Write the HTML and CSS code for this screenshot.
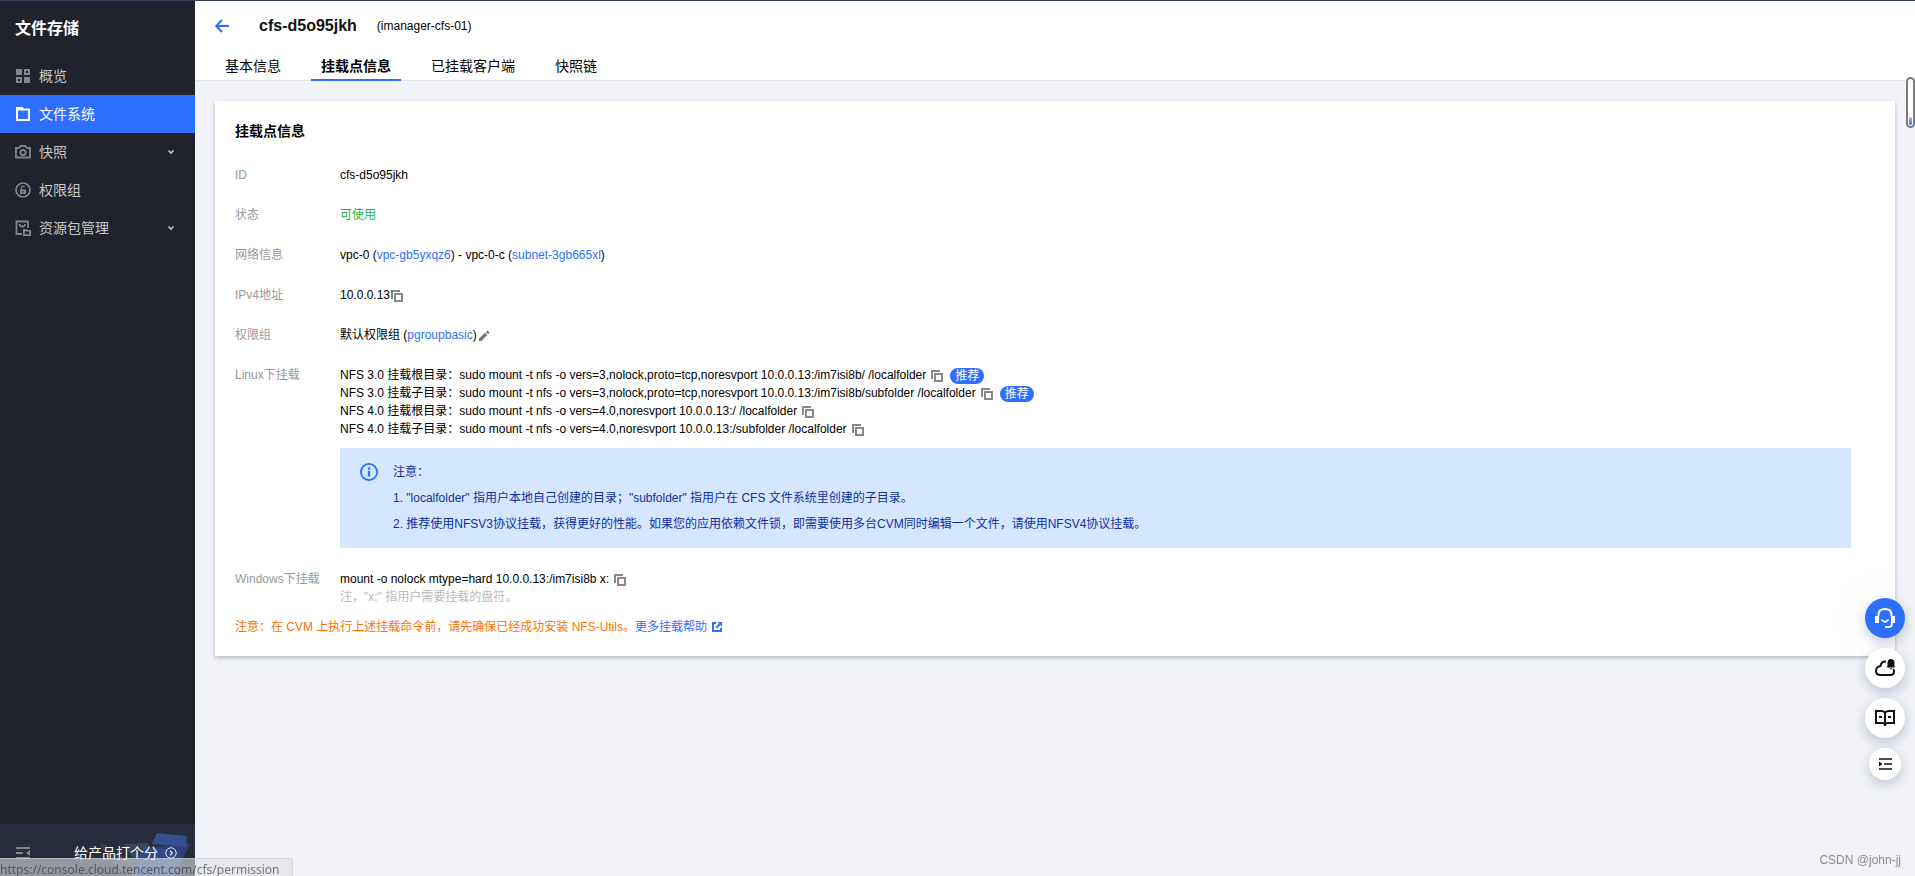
FILE: index.html
```html
<!DOCTYPE html>
<html lang="zh-CN">
<head>
<meta charset="utf-8">
<title>文件存储</title>
<link rel="stylesheet" href="styles.css">
</head>
<body>
<svg class="defs" aria-hidden="true">
  <symbol id="copy" viewBox="0 0 12 12"><path d="M1 9V1h8M4 4h7v7H4z" fill="none" stroke="#888" stroke-width="2"/></symbol>
  <symbol id="chevron" viewBox="0 0 8 6"><path d="M1.500 1.500L4 4l2.500-2.500" fill="none" stroke="#c5c8cc" stroke-width="1.600"/></symbol>
</svg>
<div class="app">
  <aside class="sidebar">
    <h2 class="sidebar-title">文件存储</h2>
    <nav class="menu">
      <a class="menu-item" href="#"><svg class="menu-icon" viewBox="0 0 16 16"><path d="M1 1h6v6H1zM9 9h6v6H9z" fill="#80868c"/><path d="M10 2h4v4h-4zM2 10h4v4H2z" fill="none" stroke="#80868c" stroke-width="2"/></svg><span>概览</span></a>
      <a class="menu-item active" href="#"><svg class="menu-icon" viewBox="0 0 16 16"><path d="M1 1h6.500l1.500 1.500h6V15H1zM3 4.500V13h10V4.500z" fill="#fff" fill-rule="evenodd"/></svg><span>文件系统</span></a>
      <a class="menu-item" href="#"><svg class="menu-icon" viewBox="0 0 16 16"><path d="M1 4h3l1.500-2h5L12 4h3v9.500H1z" fill="none" stroke="#80868c" stroke-width="1.800"/><circle cx="8" cy="8.500" r="2.600" fill="none" stroke="#80868c" stroke-width="1.800"/></svg><span>快照</span><svg class="chevron"><use href="#chevron"/></svg></a>
      <a class="menu-item" href="#"><svg class="menu-icon" viewBox="0 0 16 16"><circle cx="8" cy="8" r="7" fill="none" stroke="#80868c" stroke-width="1.700"/><path d="M5 7.500h6V12H5z" fill="#80868c"/><path d="M6.500 8V5.200q0-1 1.500-1t1.500 1" fill="none" stroke="#80868c" stroke-width="1.300"/><path d="M7.400 9h1.200v1.500H7.400z" fill="#20222c"/></svg><span>权限组</span></a>
      <a class="menu-item" href="#"><svg class="menu-icon" viewBox="0 0 16 16"><path d="M7 14H1.500V1.500H13V8M4.500 4q0 2.500 2.800 2.500T10 4" fill="none" stroke="#80868c" stroke-width="1.800"/><path d="M8 9h3.500l1 1H16v6H8zM9.800 11.500v2.700h4.400v-2.700z" fill="#80868c" fill-rule="evenodd"/></svg><span>资源包管理</span><svg class="chevron"><use href="#chevron"/></svg></a>
    </nav>
    <div class="sidebar-foot">
      <svg class="foot-art" viewBox="0 0 96 44" aria-hidden="true">
        <path d="M2 12q6-2 10 3l8 9 24 2 2 18H34Q18 36 2 12z" fill="#353c4c"/>
        <path d="M26 12l26-1-8 26z" fill="#3d4557"/>
        <path d="M50 16l42-5q1 1-1 5L78 44H38z" fill="#2c4179"/><path d="M60 1l30 3-1 11-34-3z" fill="#35508f"/><path d="M47 15l37 4-9 25H36z" fill="#304986"/>
      </svg>
      <button class="collapse" type="button" aria-label="收起菜单"><svg viewBox="0 0 16 14"><path d="M1 2h14M1 7h7M1 12h14" stroke="#80868c" stroke-width="2"/><path d="M15 4v6l-4-3z" fill="#80868c"/></svg></button>
      <a class="rate" href="#"><span>给产品打个分</span><svg viewBox="0 0 12 12"><circle cx="6" cy="6" r="5.200" fill="none" stroke="#e6e8ee"/><path d="M5 3.700L7.300 6 5 8.300" fill="none" stroke="#e6e8ee" stroke-width="1.300"/></svg></a>
    </div>
  </aside>

  <main class="main">
    <header class="header">
      <div class="heading">
        <button class="back" type="button" aria-label="返回"><svg viewBox="0 0 14 14"><path d="M14 7H1.500M7 1L1.200 7 7 13" fill="none" stroke="#2e6fff" stroke-width="2"/></svg></button>
        <h1>cfs-d5o95jkh</h1>
        <span class="alias">(imanager-cfs-01)</span>
      </div>
      <nav class="tabs">
        <a class="tab" href="#">基本信息</a>
        <a class="tab selected" href="#">挂载点信息</a>
        <a class="tab" href="#">已挂载客户端</a>
        <a class="tab" href="#">快照链</a>
      </nav>
    </header>

    <section class="card">
      <h3>挂载点信息</h3>
      <dl class="info">
        <dt>ID</dt><dd>cfs-d5o95jkh</dd>
        <dt>状态</dt><dd class="ok">可使用</dd>
        <dt>网络信息</dt><dd>vpc-0 (<a href="#">vpc-gb5yxqz6</a>) - vpc-0-c (<a href="#">subnet-3gb665xl</a>)</dd>
        <dt>IPv4地址</dt><dd class="line tight"><span>10.0.0.13</span><button class="copy" type="button" aria-label="复制"><svg><use href="#copy"/></svg></button></dd>
        <dt>权限组</dt><dd class="line tight"><span>默认权限组 (<a href="#">pgroupbasic</a>)</span><button class="copy" type="button" aria-label="编辑"><svg viewBox="0 0 12 12"><path d="M1 11V8.500L7 2.800 9.300 5 3.500 11zM7.900 2L9.500.600 11.500 2.500 10.100 4.200z" fill="#777"/></svg></button></dd>
        <dt>Linux下挂载</dt>
        <dd>
          <div class="line"><span>NFS 3.0 挂载根目录：sudo mount -t nfs -o vers=3,nolock,proto=tcp,noresvport 10.0.0.13:/im7isi8b/ /localfolder</span><button class="copy" type="button" aria-label="复制"><svg><use href="#copy"/></svg></button><span class="badge">推荐</span></div>
          <div class="line"><span>NFS 3.0 挂载子目录：sudo mount -t nfs -o vers=3,nolock,proto=tcp,noresvport 10.0.0.13:/im7isi8b/subfolder /localfolder</span><button class="copy" type="button" aria-label="复制"><svg><use href="#copy"/></svg></button><span class="badge">推荐</span></div>
          <div class="line"><span>NFS 4.0 挂载根目录：sudo mount -t nfs -o vers=4.0,noresvport 10.0.0.13:/ /localfolder</span><button class="copy" type="button" aria-label="复制"><svg><use href="#copy"/></svg></button></div>
          <div class="line"><span>NFS 4.0 挂载子目录：sudo mount -t nfs -o vers=4.0,noresvport 10.0.0.13:/subfolder /localfolder</span><button class="copy" type="button" aria-label="复制"><svg><use href="#copy"/></svg></button></div>
          <div class="alert">
            <svg class="alert-icon" viewBox="0 0 16 16"><circle cx="8" cy="8" r="7.200" fill="none" stroke="#2e6fff" stroke-width="1.600"/><path d="M8 4v2M8 7v5" stroke="#2e6fff" stroke-width="2"/></svg>
            <div class="alert-text">
              <p>注意：</p>
              <p>1. "localfolder" 指用户本地自己创建的目录；"subfolder" 指用户在 CFS 文件系统里创建的子目录。</p>
              <p>2. 推荐使用NFSV3协议挂载，获得更好的性能。如果您的应用依赖文件锁，即需要使用多台CVM同时编辑一个文件，请使用NFSV4协议挂载。</p>
            </div>
          </div>
        </dd>
        <dt>Windows下挂载</dt>
        <dd>
          <div class="line"><span>mount -o nolock mtype=hard 10.0.0.13:/im7isi8b x:</span><button class="copy" type="button" aria-label="复制"><svg><use href="#copy"/></svg></button></div>
          <div class="hint">注，"x:" 指用户需要挂载的盘符。</div>
        </dd>
      </dl>
      <p class="warn">注意：在 CVM 上执行上述挂载命令前，请先确保已经成功安装 NFS-Utils。<a href="#">更多挂载帮助<svg class="external" viewBox="0 0 10 10"><path d="M4 1H1v8h8V6" fill="none" stroke="#2e6fff" stroke-width="2"/><path d="M5.500 0H10v4.500L8.500 3.100 5 6.600 3.500 5.100 7 1.600z" fill="#2e6fff"/></svg></a></p>
    </section>
  </main>
</div>

<div class="floaters">
  <button class="float primary" type="button" aria-label="在线客服"><svg viewBox="0 0 20 20" fill="none" stroke="#fff" stroke-width="2"><path d="M3.500 8V7q0-6 6.500-6t6.500 6v1"/><path d="M0 8h4v7H0zM16 8h4v7h-4z" fill="#fff" stroke="none"/><path d="M16.800 14v2q0 3-3 3H10"/><path d="M6.500 11.500q3.500 4.500 7 0"/></svg></button>
  <button class="float" type="button" aria-label="消息"><svg viewBox="0 0 20 20" fill="none" stroke="#111" stroke-width="2"><path d="M11 3.500Q6.300 3 5.500 8 1 9 1 12.800 1 17 5.500 17H15q4 0 4-3.500 0-1.500-.800-2.500"/><path d="M11.500 9.500l1-1.500V5q0-4 3.500-4t3.500 4v3l.500 1.500zM14.500 10.200h3l-1.500 1.300z" fill="#111" stroke="none"/></svg></button>
  <button class="float" type="button" aria-label="文档"><svg viewBox="0 0 20 20" fill="none" stroke="#111" stroke-width="2"><path d="M10 4.500Q8.500 3 6 3H1v12h6q2 0 3 1.500 1-1.500 3-1.500h6V3h-5q-2.500 0-4 1.500zV18"/><path d="M4 9h3M13 9h3"/></svg></button>
  <button class="float small" type="button" aria-label="目录"><svg viewBox="0 0 14 12" fill="none" stroke="#111" stroke-width="1.600"><path d="M1 1h13M6 6h8M1 11h13"/><path d="M1 3.500v5L4.500 6z" fill="#111" stroke="none"/></svg></button>
</div>
<div class="meter"><div class="meter-fill"></div></div>
<div class="watermark">CSDN @john-jj</div>
<div class="status">https://console.cloud.tencent.com/cfs/permission</div>
</body>
</html>
```
FILE: styles.css
```css
* { box-sizing: border-box; margin: 0; padding: 0; }
body {
  background: #f2f3f8;
  color: #000;
  font: 12px/18px "Liberation Sans", "Noto Sans CJK SC", sans-serif;
  overflow: hidden;
}
a { color: #2e6fff; text-decoration: none; }
button { background: none; border: 0; font: inherit; cursor: pointer; }
svg { display: block; flex: none; }
.defs { position: absolute; width: 0; height: 0; }

.app { display: flex; min-height: 100vh; border-top: 1px solid #35415b; }

.sidebar { display: flex; flex-direction: column; flex: 0 0 195px; background: #20222c; }
.sidebar-title { padding: 16px 15px; color: #fff; font-size: 16px; line-height: 24px; }
.menu-item {
  display: flex; align-items: center; gap: 8px;
  height: 38px; padding: 0 20px 0 15px;
  color: #c5c8cc; font-size: 14px;
}
.menu-item.active { background: #2e6fff; color: #fff; }
.menu-icon { width: 16px; height: 16px; }
.chevron { width: 8px; height: 6px; margin-left: auto; }
.sidebar-foot {
  position: relative; display: flex; align-items: center; justify-content: space-between;
  height: 52px; margin-top: auto; padding: 6px 18px 0 15px; background: #272d3b;
}
.foot-art { position: absolute; right: 2px; bottom: 0; width: 96px; height: 44px; }
.collapse svg { width: 16px; height: 14px; }
.rate { position: relative; display: flex; align-items: center; gap: 7px; color: #fff; font-size: 14px; }
.rate svg { width: 12px; height: 12px; }

.main { flex: 1; min-width: 0; }
.header { padding: 0 20px; background: #fff; border-bottom: 1px solid #e2e4ea; }
.heading { display: flex; align-items: center; height: 50px; }
.back svg { width: 14px; height: 14px; }
.heading h1 { margin: 0 20px 0 30px; font-size: 16px; line-height: 24px; color: #111; }
.tabs { display: flex; gap: 20px; height: 29px; }
.tab { padding: 0 10px; height: 30px; color: #000; font-size: 14px; line-height: 30px; }
.tab.selected { border-bottom: 2px solid #2e6fff; font-weight: 700; }

.card { margin: 20px; padding: 20px; background: #fff; box-shadow: 0 2px 4px rgba(54, 58, 80, .32); }
.card h3 { margin-bottom: 24px; font-size: 14px; line-height: 21px; }
.info { display: grid; grid-template-columns: 105px 1fr; row-gap: 22px; padding-right: 24px; }
.info dt { color: #999; }
.ok { color: #29b348; }
.line { display: flex; align-items: center; gap: 5px; height: 18px; }
.line.tight { gap: 1px; }
.copy svg { width: 12px; height: 12px; }
.line .copy { padding-top: 2px; }
.badge { height: 16px; margin: 2px 0 0 2px; padding: 0 5px; border-radius: 8px; background: #2e6fff; color: #fff; line-height: 16px; }
.alert { display: flex; gap: 15px; margin-top: 10px; padding: 11px 20px; background: #d5e7ff; color: #0f2f9f; }
.alert-icon { width: 18px; height: 18px; margin-top: 4px; }
.alert-text { line-height: 26px; }
.hint { color: #bbb; }
.warn { margin-top: 12px; color: #ff7200; }
.external { display: inline-block; width: 10px; height: 10px; margin-left: 5px; vertical-align: -1px; }

.floaters { position: fixed; right: 10px; bottom: 96px; display: flex; flex-direction: column; align-items: center; gap: 10px; }
.float {
  display: flex; align-items: center; justify-content: center;
  width: 40px; height: 40px; border-radius: 50%; background: #fff;
  box-shadow: 0 4px 12px rgba(55, 75, 120, .28), 0 0 60px rgba(55, 75, 120, .06);
}
.float svg { width: 20px; height: 20px; }
.float.primary { background: #2e6fff; }
.float.small { width: 32px; height: 32px; }
.float.small svg { width: 14px; height: 12px; }

.meter {
  position: fixed; top: 77px; right: 0; display: flex; align-items: flex-end;
  width: 9px; height: 51px; padding: 1px; border: 2px solid #7a7a7a; border-radius: 5px; background: #fff;
}
.meter-fill { width: 100%; height: 8px; border-radius: 2px; background: linear-gradient(#7cc0ff, #2e7bf5); }
.watermark { position: fixed; right: 14px; bottom: 7px; color: #8b8d92; }
.status {
  position: fixed; left: 0; bottom: 0; height: 18px; padding: 0 12px 0 0;
  border: 1px solid rgba(200, 202, 208, .6); border-width: 1px 1px 0 0; border-top-right-radius: 4px;
  background: rgba(222, 225, 230, .6); color: rgba(40, 42, 48, .6);
  font-family: "Noto Sans", sans-serif; line-height: 22px;
}
```
